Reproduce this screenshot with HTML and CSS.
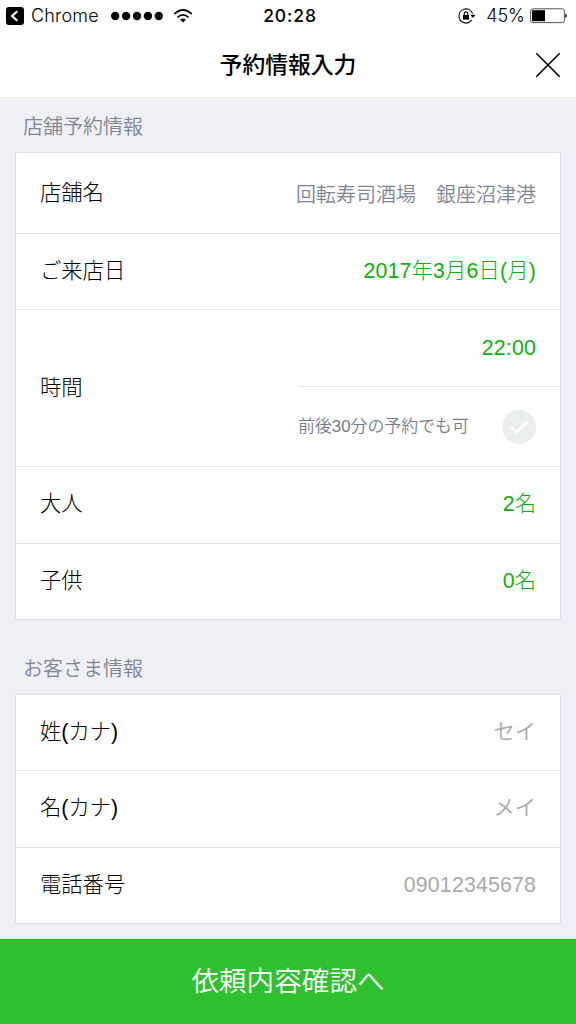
FILE: index.html
```html
<!DOCTYPE html>
<html lang="ja">
<head>
<meta charset="utf-8">
<title>予約情報入力</title>
<link rel="stylesheet" href="styles.css">
</head>
<body>
<div class="status">
  <div class="status-left">
    <svg class="back" viewBox="0 0 18 18"><rect width="18" height="18" rx="3" fill="#000"/><path d="M11.3 4.2L6 9l5.3 4.8" fill="none" stroke="#fff" stroke-width="2.1"/></svg>
    <span class="carrier">Chrome</span>
    <svg class="signal" viewBox="0 0 52 10"><circle cx="4.2" cy="5" r="4.2"/><circle cx="15.1" cy="5" r="4.2"/><circle cx="26" cy="5" r="4.2"/><circle cx="36.9" cy="5" r="4.2"/><circle cx="47.8" cy="5" r="4.2"/></svg>
    <svg class="wifi" viewBox="0 0 20 14"><path d="M1.3 5Q10-3 18.7 5M4.4 8.3Q10 3.4 15.6 8.3" fill="none" stroke="#000" stroke-width="1.7"/><path d="M7.2 10.8Q10 8.4 12.8 10.8L10 13.6z"/></svg>
  </div>
  <div class="clock">20:28</div>
  <div class="status-right">
    <svg class="lock" viewBox="0 0 18 16"><path d="M14.6 5.6A7 7 0 0 0 1 8a7 7 0 0 0 12.6 4.2" fill="none" stroke="#000" stroke-width="1.1"/><path d="M12.2 6.8h5.4l-2.7 3.2z"/><rect x="5" y="7" width="6" height="4.6"/><path d="M6.2 7.2V5.7a1.8 1.8 0 0 1 3.6 0v1.5" fill="none" stroke="#000" stroke-width="1.1"/></svg>
    <span class="percent">45%</span>
    <svg class="battery" viewBox="0 0 37 16"><rect x=".6" y=".8" width="33.8" height="13.8" rx="2.2" fill="none" stroke="#555"/><rect x="2" y="2.2" width="13" height="11"/><path d="M35.3 5.5q1.5.4 1.5 2.3t-1.5 2.3z"/></svg>
  </div>
</div>
<header class="header">
  <h1 class="title">予約情報入力</h1>
  <svg class="close" viewBox="0 0 26 26"><path d="M1.3 1.3l23.4 23.4M24.7 1.3L1.3 24.7" stroke="#000" stroke-width="1.6"/></svg>
</header>
<main class="content">
  <h2 class="section">店舗予約情報</h2>
  <div class="card">
    <div class="row row-shop"><span class="label">店舗名</span><span class="value shop">回転寿司酒場　銀座沼津港</span></div>
    <div class="row row-date"><span class="label">ご来店日</span><span class="value green date">2017年3月6日(月)</span></div>
    <div class="row row-time">
      <span class="label">時間</span>
      <div class="time">
        <div class="time-value"><span class="value green date">22:00</span></div>
        <div class="time-option"><span class="note">前後30分の予約でも可</span>
          <svg class="check" viewBox="0 0 34 34"><circle cx="17" cy="17" r="17" fill="#ebeeef"/><path d="M9 17l5.9 5.5L25.3 11.5" fill="none" stroke="#fff" stroke-width="2.6"/></svg>
        </div>
      </div>
    </div>
    <div class="row row-adult"><span class="label">大人</span><span class="value green">2名</span></div>
    <div class="row row-child"><span class="label">子供</span><span class="value green">0名</span></div>
  </div>
  <h2 class="section section-customer">お客さま情報</h2>
  <div class="card card-customer">
    <div class="row row-sei"><span class="label">姓(カナ)</span><span class="value hint">セイ</span></div>
    <div class="row row-mei"><span class="label">名(カナ)</span><span class="value hint">メイ</span></div>
    <div class="row row-phone"><span class="label">電話番号</span><span class="value hint phone">09012345678</span></div>
  </div>
</main>
<button class="submit">依頼内容確認へ</button>
</body>
</html>
```
FILE: styles.css
```css
* { box-sizing: border-box; }
body {
  margin: 0;
  width: 576px;
  height: 1024px;
  display: flex;
  flex-direction: column;
  overflow: hidden;
  background: #fff;
  color: #000;
  font-family: "Liberation Sans", "Noto Sans CJK JP", sans-serif;
  font-weight: 350;
}
svg { display: block; flex: none; }

.status {
  height: 32px;
  display: grid;
  grid-template-columns: 1fr auto 1fr;
  align-items: center;
  padding: 0 9px 0 6px;
  font: 400 19px/32px Inter, sans-serif;
}
.status-left, .status-right { display: flex; align-items: center; }
.status-right { justify-content: flex-end; }
.back { width: 18px; height: 18px; }
.carrier { margin-left: 7px; width: 68px; font-size: 18px; line-height: 31px; padding-bottom: 1px; font-weight: 300; letter-spacing: .2px; }
.signal { width: 52px; height: 10px; margin-left: 12px; }
.wifi { width: 20px; height: 14px; margin-left: 10px; }
.clock { font-size: 17.5px; font-weight: 500; letter-spacing: .9px; padding-left: 7px; }
.lock { width: 18px; height: 16px; margin-right: 10px; }
.percent { font-size: 18px; font-weight: 300; }
.battery { width: 37px; height: 16px; margin-left: 5px; }

.header {
  height: 65px;
  display: grid;
  grid-template-columns: 1fr auto 1fr;
  align-items: center;
}
.title { grid-column: 2; margin: 0; padding-bottom: 2px; font-size: 22.8px; line-height: 63px; font-weight: 500; font-family: "Noto Sans CJK JP", sans-serif; }
.close { width: 26px; height: 26px; justify-self: end; margin-right: 15px; }

.content {
  height: 842px;
  background: #eff0f5;
  border-top: 1px solid #e9ecf0;
  padding: 0 15px;
}
.section {
  margin: 0;
  height: 54px;
  padding: 3px 0 0 8px;
  font-size: 20px;
  line-height: 52px;
  font-weight: 350;
  color: #7f8594;
}
.section-customer { height: 74px; padding-top: 23px; }
.card {
  width: 546px;
  height: 468px;
  background: #fff;
  border: 1px solid #dfe0e7;
}
.card-customer { height: 230px; }
.row {
  height: 76px;
  display: flex;
  align-items: center;
  justify-content: space-between;
  padding: 0 24px 2px;
  font-size: 21.3px;
  line-height: 32px;
}
.row + .row { border-top: 1px solid #e1e3ea; }
.row.row-shop { height: 80px; padding-bottom: 0; }
.row.row-time { height: 157px; padding-right: 0; padding-bottom: 0; }
.row.row-adult, .row.row-mei { height: 77px; }
.row.row-sei { height: 75px; }
.row.row-phone { height: 76px; }
.row-shop .shop { font-size: 20px; color: #7f8594; padding-top: 3px; }
.label, .green { font-weight: 300; }
.green { color: #0bb20b; }
.hint { color: #a9a9a9; }
.date, .phone { letter-spacing: .17px; }
.time { width: 262px; height: 156px; }
.time-value {
  height: 77px;
  border-bottom: 1px solid #e1e3ea;
  display: flex;
  align-items: center;
  justify-content: flex-end;
  padding-right: 24px;
}
.time-option {
  height: 79px;
  display: flex;
  align-items: center;
  justify-content: space-between;
  padding-right: 24px;
}
.note { font-size: 16.9px; color: #757c8c; }
.check { width: 34px; height: 34px; }

.submit {
  height: 85px;
  width: 100%;
  border: 0;
  border-top: 1px solid #0eb40f;
  padding: 0 0 6px;
  background: #2fc12f;
  color: #fff;
  font: 350 27.6px/40px "Noto Sans CJK JP", sans-serif;
}
```
